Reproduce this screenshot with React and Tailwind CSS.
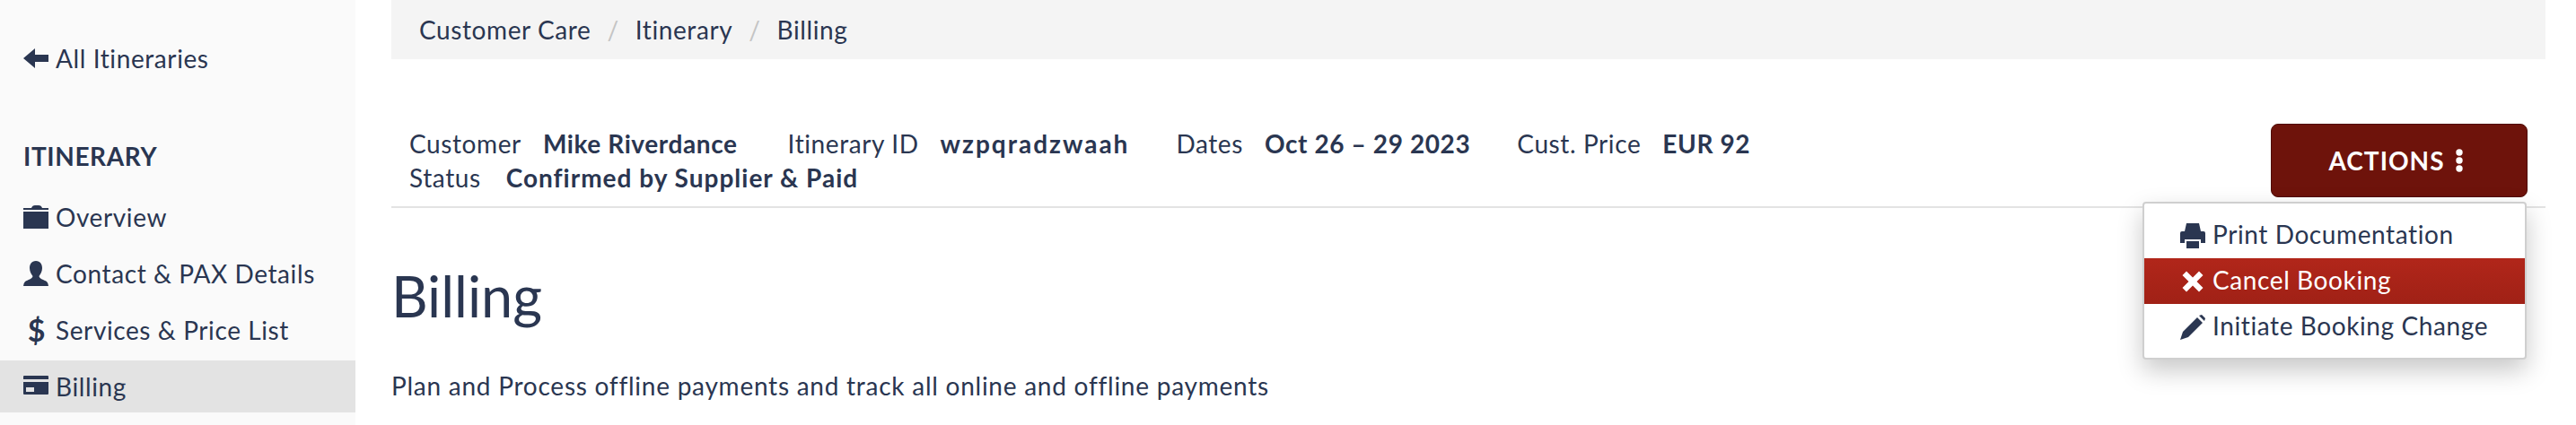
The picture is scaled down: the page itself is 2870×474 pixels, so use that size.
const ink = "#2a3651";

const I = {
  arrow: <path d="M0 14 L13 3 V10 H28 V18 H13 V25 Z" />,
  folder: <path d="M0 4 H9 Q10 1 13 1 H17 Q20 1 21 4 H28 V6 H0 Z M0 8 H28 V27 H0 Z" />,
  user: <path d="M14 0 C19 0 21 4 21 8 C21 12 19 15 17.500 17 C18 20 23 21 26 23 Q28 25 28 28 H0 Q0 25 2 23 C5 21 10 20 10.500 17 C9 15 7 12 7 8 C7 4 9 0 14 0 Z" />,
  card: <path fillRule="evenodd" d="M1 2 H27 Q28 2 28 3 V6 H0 V3 Q0 2 1 2 Z M0 9 H28 V22 Q28 23 27 23 H1 Q0 23 0 22 Z M3 15 V20 H12 V15 Z" />,
  print: <path fillRule="evenodd" d="M7 0 H21 L23 9 H26 Q28 9 28 11 V22 H23 V18 H5 V22 H0 V11 Q0 9 2 9 H5 Z M7 20 H21 V28 H7 Z" />,
  x: <path d="M7 2.500 L14 9.500 L21 2.500 L25.500 7 L18.500 14 L25.500 21 L21 25.500 L14 18.500 L7 25.500 L2.500 21 L9.500 14 L2.500 7 Z" />,
  pencil: <path d="M0 28 L3 19 L19 3 L25 9 L9 25 Z M21 1 L24 0 L28 4 L27 7 Z" />,
};

function Icon({ d, color = ink }) {
  return (
    <svg width={28} height={28} viewBox="0 0 28 28" fill={color} className="shrink-0">
      {d}
    </svg>
  );
}

function NavRow({ icon, label, active }) {
  return (
    <div className={`flex h-[58px] items-center gap-2 pl-[26px] mb-[5px] text-[28px] tracking-[0.6px] ${active ? "bg-[#e3e3e3]" : ""}`}>
      {icon}
      <span>{label}</span>
    </div>
  );
}

function Pair({ k, v, gap, bold }) {
  return (
    <span className={`inline-flex ${gap}`}>
      <span>{k}</span>
      <b className={`font-bold ${bold}`}>{v}</b>
    </span>
  );
}

function Item({ icon, label, active }) {
  return (
    <div className={`flex h-[51px] items-center gap-2 pl-10 text-[28px] tracking-[0.6px] ${active ? "bg-gradient-to-b from-[#b1261a] to-[#a02116] text-white" : ""}`}>
      {icon}
      <span className="pb-[3px]">{label}</span>
    </div>
  );
}

export default function App() {
  return (
    <div className="flex h-[474px] w-[2870px] overflow-hidden bg-white text-[#2a3651] font-['Lato','Liberation_Sans',sans-serif]">
      <aside className="w-[396px] shrink-0 bg-[#fafafa]">
        <div className="flex h-[58px] mt-[36px] items-center gap-2 pl-[26px] text-[28px] tracking-[0.6px]">
          <Icon d={I.arrow} />
          <span>All Itineraries</span>
        </div>
        <div className="mt-[63px] mb-[22px] pl-[26px] text-[28px] font-bold leading-[34px] tracking-[0.6px]">ITINERARY</div>
        <NavRow icon={<Icon d={I.folder} />} label="Overview" />
        <NavRow icon={<Icon d={I.user} />} label="Contact & PAX Details" />
        <NavRow icon={<span className="w-7 pl-[2px] text-center text-[34px] font-bold leading-[58px]">$</span>} label="Services & Price List" />
        <NavRow icon={<Icon d={I.card} />} label="Billing" active />
      </aside>

      <main className="ml-10 w-[2400px] shrink-0">
        <nav className="flex h-[66px] items-center gap-[18px] bg-[#f4f4f4] pl-[31px] text-[28px] tracking-[0.6px]">
          <span>Customer Care</span>
          <span className="text-[#c4c4c4]">/</span>
          <span>Itinerary</span>
          <span className="text-[#c4c4c4]">/</span>
          <span>Billing</span>
        </nav>

        <div className="relative h-[166px] border-b-2 border-[#e3e3e3] pl-5 pt-[75px] text-[28px] leading-[38px] tracking-[0.6px]">
          <div>
            <Pair k="Customer" v="Mike Riverdance" gap="gap-6 mr-14" />
            <Pair k="Itinerary ID" v="wzpqradzwaah" gap="gap-6 mr-[52px]" bold="tracking-[2px]" />
            <Pair k="Dates" v="Oct 26 – 29 2023" gap="gap-6 mr-[52px]" />
            <Pair k="Cust. Price" v="EUR 92" gap="gap-6" />
          </div>
          <div>
            <Pair k="Status" v="Confirmed by Supplier & Paid" gap="gap-7" bold="tracking-[1px]" />
          </div>

          <button className="absolute right-5 top-[72px] flex h-[82px] w-[286px] items-center justify-center gap-3 rounded-lg border border-[#4f0c05] bg-[#6e130b] pr-2 text-[28px] font-bold tracking-[1px] text-white">
            ACTIONS
            <svg width="8" height="26" viewBox="0 0 8 26" fill="white"><circle cx="4" cy="4" r="3.700" /><circle cx="4" cy="13" r="3.700" /><circle cx="4" cy="22" r="3.700" /></svg>
          </button>

          <div className="absolute right-[21px] top-[159px] h-[176px] w-[428px] rounded border-2 border-[#cfcfcf] bg-white pt-[10px] shadow-[0_12px_28px_rgba(0,0,0,0.22)]">
            <Item icon={<Icon d={I.print} />} label="Print Documentation" />
            <Item icon={<Icon d={I.x} color="white" />} label="Cancel Booking" active />
            <Item icon={<Icon d={I.pencil} />} label="Initiate Booking Change" />
          </div>
        </div>

        <h1 className="mt-[61px] text-[63px] font-normal leading-[74px]">Billing</h1>
        <p className="mt-[44px] text-[28px] leading-[38px] tracking-[0.75px]">Plan and Process offline payments and track all online and offline payments</p>
      </main>
    </div>
  );
}
